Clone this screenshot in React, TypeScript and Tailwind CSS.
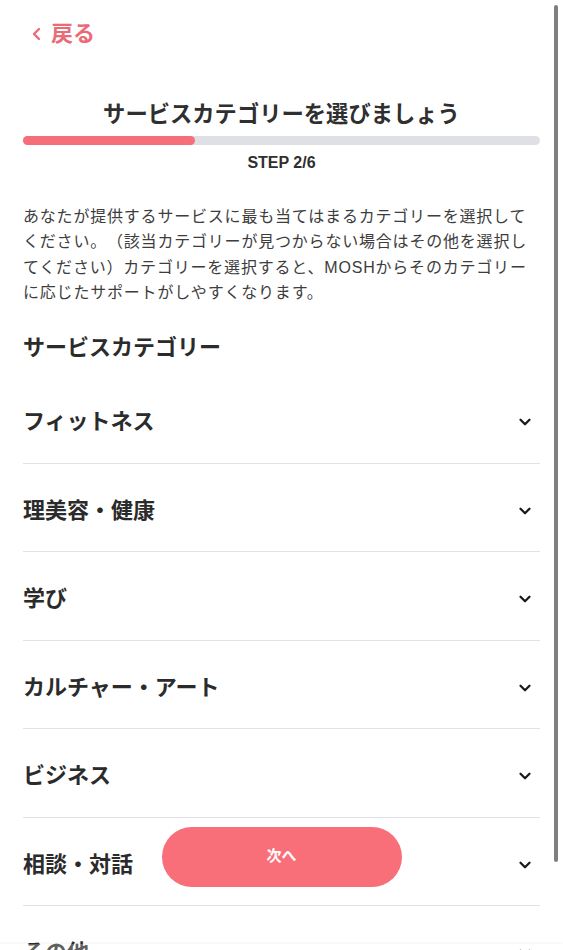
import { ChevronDown } from 'lucide-react';

const categories = [
  'フィットネス',
  '理美容・健康',
  '学び',
  'カルチャー・アート',
  'ビジネス',
  '相談・対話',
  'その他',
];

function CategoryRow({ label }: { label: string }) {
  return (
    <div className="flex items-center justify-between border-b border-[#e1e1e7] pt-[33px] pb-[26.5px]">
      <span className="text-[22px] font-bold leading-[28px] text-[#2b2b2b]">{label}</span>
      <ChevronDown className="mr-[6px] h-[18px] w-[18px] text-[#1a1a1a]" strokeWidth={3} />
    </div>
  );
}

export default function App() {
  return (
    <div
      className="relative h-[950px] overflow-hidden bg-white [text-spacing-trim:space-all]"
      style={{ fontFamily: '"Liberation Sans", "Noto Sans CJK JP", sans-serif' }}
    >
      <div className="px-[23px] pt-[20px]">
        {/* back link */}
        <div className="flex h-[28px] items-center gap-[10px] pl-[9px] text-[#ea6b76]">
          <svg width="9" height="14" viewBox="0 0 9 14" fill="none" stroke="currentColor" strokeWidth="2.4" strokeLinecap="round" strokeLinejoin="round">
            <polyline points="7,2 2,7 7,12" />
          </svg>
          <span className="text-[22px] font-bold leading-[28px]">戻る</span>
        </div>

        <h1 className="mt-[52px] text-center text-[22.3px] font-bold leading-[30px] text-[#2f2f2f]">
          サービスカテゴリーを選びましょう
        </h1>

        <div className="mt-[6px] h-[9px] w-full rounded-full bg-[#dfe0e5]">
          <div className="h-full w-1/3 rounded-full bg-[#f66e7a]" />
        </div>

        <p className="mt-[7px] text-center text-[16px] font-bold leading-[22px] text-[#2f2f2f]">STEP 2/6</p>

        <p className="mt-[30px] text-[16px] leading-[25.3px] tracking-[0.8px] text-[#3d3d3d]">
          あなたが提供するサービスに最も当てはまるカテゴリーを選択してください。（該当カテゴリーが見つからない場合はその他を選択してください）カテゴリーを選択すると、MOSHからそのカテゴリーに応じたサポートがしやすくなります。
        </p>

        <h2 className="mt-[28px] text-[22px] font-bold leading-[30px] text-[#2b2b2b]">サービスカテゴリー</h2>

        <div className="mt-[12px]">
          {categories.map(c => (
            <CategoryRow key={c} label={c} />
          ))}
        </div>
      </div>

      {/* next button */}
      <button className="absolute left-1/2 top-[827px] flex h-[60px] w-[240px] -translate-x-1/2 items-center justify-center rounded-full bg-[#f86f7a] pb-[2px] text-[15px] font-bold text-white">
        次へ
      </button>

      {/* footer fade */}
      <div className="absolute bottom-0 left-0 right-0 h-[6px] bg-white/25 shadow-[0_-1px_3px_rgba(0,0,0,0.05)]" />

      {/* overlay scrollbar */}
      <div className="absolute right-[5px] top-[5px] h-[857px] w-[4px] rounded-full bg-[#7f7f7f]" />
    </div>
  );
}
